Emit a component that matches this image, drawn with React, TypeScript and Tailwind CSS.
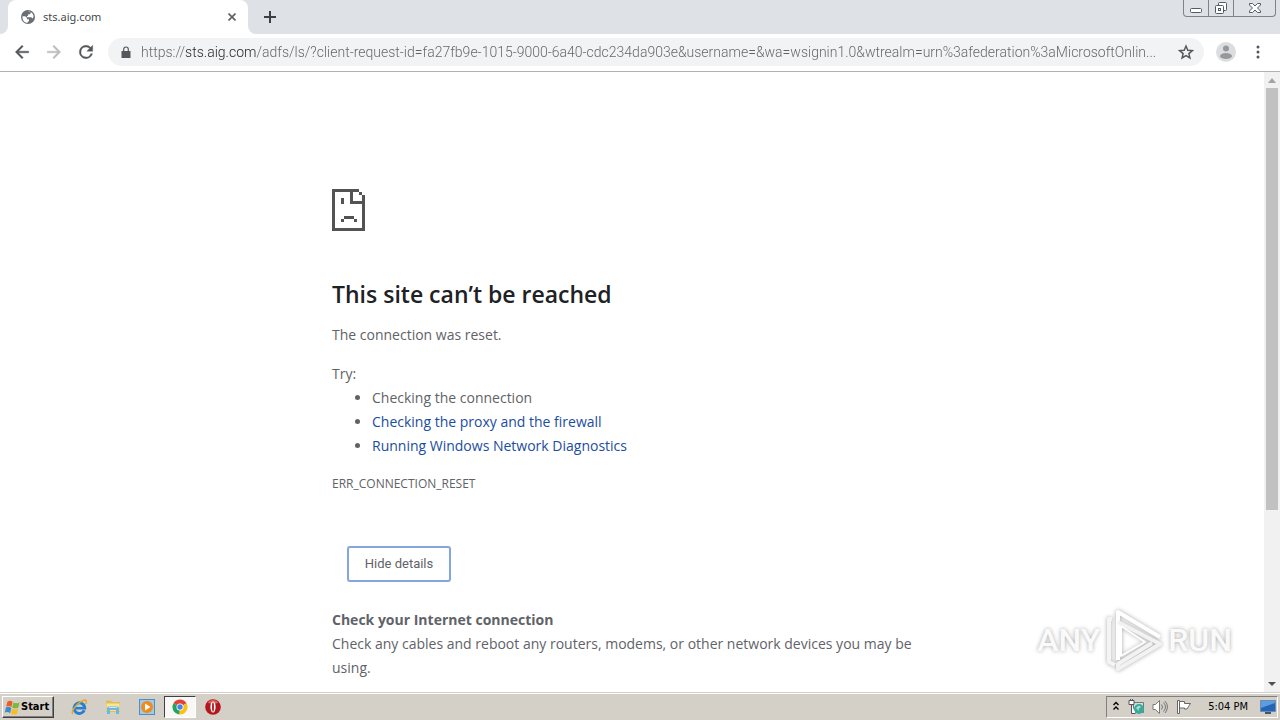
import { useState } from "react";
import type { ReactNode } from "react";

const PAGE_URL =
  "https://sts.aig.com/adfs/ls/?client-request-id=fa27fb9e-1015-9000-6a40-cdc234da903e&username=&wa=wsignin1.0&wtrealm=urn%3afederation%3aMicrosoftOnlin...";

function GlobeIcon() {
  return (
    <svg className="size-4 shrink-0" viewBox="0 0 16 16" aria-hidden="true">
      <circle cx="8" cy="8" r="7" fill="#6b6e72" />
      <path d="M2.500 7.200h2.700l1.800 1.700v1.300h2v1.600l-1.600 2C4.300 13.600 2 11 2.500 7.200Z" fill="#fff" />
      <path d="M8 2.600 11.200 3.500 9.800 5.300H8.200v1.300L6.900 7.300v1h4.300l1.700 1.100 .7-2.400-1.400-3L9.500 2.400Z" fill="#fff" />
    </svg>
  );
}

function TabStrip() {
  return (
    <header className="flex h-[34px] shrink-0 items-end bg-[#dee1e6] pl-2">
      <div className="relative flex h-full w-60 items-center rounded-t-lg bg-white pr-2 pl-3">
        <GlobeIcon />
        <span className="ml-[7px] flex-1 font-['Noto_Sans'] text-[11px] text-[#45494d]">sts.aig.com</span>
        <button type="button" aria-label="Close tab" className="flex size-4 items-center justify-center">
          <svg className="size-2" viewBox="0 0 8 8" stroke="#5f6368" strokeWidth="1.700">
            <path d="m.5.5 7 7M7.500.5l-7 7" />
          </svg>
        </button>
        <svg className="absolute bottom-0 -left-2 size-2" viewBox="0 0 8 8" fill="#fff" aria-hidden="true">
          <path d="M0 8a8 8 0 0 0 8-8v8Z" />
        </svg>
        <svg className="absolute -right-2 bottom-0 size-2" viewBox="0 0 8 8" fill="#fff" aria-hidden="true">
          <path d="M8 8a8 8 0 0 1-8-8v8Z" />
        </svg>
      </div>
      <button type="button" aria-label="New tab" className="ml-2 flex h-full w-7 items-center justify-center">
        <svg className="size-3" viewBox="0 0 12 12" stroke="#3c4043" strokeWidth="2">
          <path d="M6 0v12M0 6h12" />
        </svg>
      </button>
      <div className="mr-1 ml-auto flex h-[17px] self-start overflow-hidden rounded-b border border-t-0 border-[#7f848c] bg-[#dee1e6]">
        <button type="button" aria-label="Minimize" className="flex w-[25px] items-center justify-center border-r border-[#7f848c]">
          <svg className="h-4 w-3" viewBox="0 0 12 16" fill="#fff" stroke="#555a66">
            <rect x=".5" y="8.500" width="11" height="4" rx="1" />
          </svg>
        </button>
        <button type="button" aria-label="Restore" className="flex w-[25px] items-center justify-center border-r border-[#7f848c]">
          <svg className="h-4 w-3" viewBox="0 0 12 16" fill="#fff" stroke="#555a66">
            <rect x="3.500" y="2.500" width="8" height="8" rx="1" />
            <rect x=".5" y="5.500" width="8" height="8" rx="1" />
            <rect x="3.500" y="8.500" width="2" height="2" />
          </svg>
        </button>
        <button type="button" aria-label="Close" className="flex w-[41px] items-center justify-center">
          <svg className="h-4 w-3" viewBox="0 0 12 16" fill="#fff" stroke="#555a66">
            <path d="M.5 3.500h3L6 6l2.500-2.500h3v1.500L8.500 8l3 3v1.500h-3L6 10l-2.500 2.500h-3V11l3-3-3-3Z" />
          </svg>
        </button>
      </div>
    </header>
  );
}

function NavButton({ label, color, children }: { label: string; color: string; children: ReactNode }) {
  return (
    <button type="button" aria-label={label} className={`flex size-8 items-center justify-center ${color}`}>
      <svg className="size-5" viewBox="0 0 24 24" fill="currentColor">
        {children}
      </svg>
    </button>
  );
}

function Toolbar() {
  const [url, setUrl] = useState(PAGE_URL);

  return (
    <nav className="flex h-[38px] shrink-0 items-center border-b border-[#b0b2b0] bg-white pr-3 pb-px pl-1.5">
      <NavButton label="Back" color="text-[#54575b]">
        <path d="M20 11H7.830l5.590-5.590L12 4l-8 8 8 8 1.410-1.410L7.830 13H20v-2z" stroke="currentColor" strokeWidth=".5" />
      </NavButton>
      <NavButton label="Forward" color="text-[#babcbe]">
        <path d="m12 4-1.410 1.410L16.170 11H4v2h12.170l-5.580 5.590L12 20l8-8z" stroke="currentColor" strokeWidth=".5" />
      </NavButton>
      <NavButton label="Reload" color="text-[#54575b]">
        <path
          d="M17.650 6.350A7.960 7.960 0 0 0 12 4a8 8 0 1 0 7.730 10h-2.080A6 6 0 1 1 12 6c1.660 0 3.140.69 4.220 1.780L13 11h7V4l-2.350 2.350z"
          stroke="currentColor"
          strokeWidth=".5"
        />
      </NavButton>
      <div className="ml-1.5 flex h-7 min-w-0 flex-1 items-center rounded-full bg-[#f1f3f4] pr-2 pl-3">
        <svg className="h-3 w-3 shrink-0" viewBox="0 0 12 12" fill="#54575b" aria-hidden="true">
          <path d="M1.500 5h9v7h-9z" />
          <path d="M3.700 5.500V3.300a2.300 2.300 0 0 1 4.600 0v2.200" fill="none" stroke="#54575b" strokeWidth="1.200" />
        </svg>
        <input
          type="text"
          aria-label="Address and search bar"
          value={url}
          onChange={(e) => setUrl(e.target.value)}
          className="ml-[9px] min-w-0 flex-1 bg-[linear-gradient(90deg,#5f6368_44px,#202124_44px,#202124_116px,#5f6368_116px)] bg-clip-text font-['Roboto'] text-sm font-light text-transparent caret-black outline-none"
        />
        <button type="button" aria-label="Bookmark this page" className="flex size-5 items-center justify-center">
          <svg className="size-4" viewBox="0 0 24 24" fill="none" stroke="#54575b" strokeWidth="2.200">
            <path d="m12 3 2.700 6.300 6.800.6-5.200 4.500 1.600 6.600-5.900-3.500L6.100 21l1.600-6.600L2.500 9.900l6.800-.6Z" />
          </svg>
        </button>
      </div>
      <button type="button" aria-label="Profile" className="ml-3 flex size-5 items-center justify-center">
        <svg className="size-5" viewBox="0 0 20 20">
          <circle cx="10" cy="10" r="10" fill="#dcdde0" />
          <circle cx="10" cy="6.500" r="3" fill="#96989b" />
          <ellipse cx="10" cy="14" rx="6" ry="3" fill="#96989b" />
        </svg>
      </button>
      <button type="button" aria-label="Menu" className="ml-3 flex size-5 items-center justify-center">
        <svg className="h-4 w-1" viewBox="0 0 4 16" fill="#54575b">
          <circle cx="2" cy="3" r="1.500" />
          <circle cx="2" cy="8" r="1.500" />
          <circle cx="2" cy="13" r="1.500" />
        </svg>
      </button>
    </nav>
  );
}

function SadPageIcon() {
  return (
    <svg className="h-[42px] w-[33px]" viewBox="0 0 33 42" fill="#535353" shapeRendering="crispEdges" aria-hidden="true">
      <path d="M0 0h27v3H0zM0 0h3v42H0zM0 39h33v3H0zM30 6h3v36h-3zM27 3h3v3h-3zM18 0h3v15h-3zM18 12h15v3H18z" />
      <path d="M9 9h3v6H9zM12 27h10v3H12zM9 30h3v3H9zM22 30h3v3h-3z" />
    </svg>
  );
}

function ErrorPage() {
  const [open, setOpen] = useState(true);

  return (
    <main className="mx-auto w-full max-w-[600px] pt-[117px] font-['Open_Sans'] text-sm leading-6 text-[#5f6368]">
      <SadPageIcon />
      <h1 className="mt-12 text-[23px] leading-[30px] font-semibold text-[#202124]">This site can’t be reached</h1>
      <p className="mt-3.5">The connection was reset.</p>
      <p className="mt-[15px]">Try:</p>
      <ul className="list-disc pl-10">
        <li>Checking the connection</li>
        <li>
          <a href="#proxy" className="text-[#1a4da0]">Checking the proxy and the firewall</a>
        </li>
        <li>
          <a href="#diagnostics" className="text-[#1a4da0]">Running Windows Network Diagnostics</a>
        </li>
      </ul>
      <p className="mt-3.5 text-xs leading-6">ERR_CONNECTION_RESET</p>
      <button
        type="button"
        onClick={() => setOpen(!open)}
        className="mt-[50px] ml-[15px] h-9 w-[104px] rounded-[3px] border-2 border-[#84a5dd] bg-white font-['Roboto'] text-[13px]"
      >
        {open ? "Hide details" : "Details"}
      </button>
      {open && (
        <section className="mt-[26px]">
          <h2 className="font-bold">Check your Internet connection</h2>
          <p>Check any cables and reboot any routers, modems, or other network devices you may be using.</p>
        </section>
      )}
    </main>
  );
}

function Scrollbar() {
  return (
    <div className="flex w-4 shrink-0 flex-col items-center bg-[#f1f1f1]" aria-hidden="true">
      <svg className="size-4 shrink-0" viewBox="0 0 16 16" fill="#a3a3a3">
        <path d="m4 11 4-5 4 5Z" />
      </svg>
      <div className="h-[68%] w-3 bg-[#c1c1c1]" />
      <svg className="mt-auto size-4 shrink-0" viewBox="0 0 16 16" fill="#505050">
        <path d="m4 6 4 4 4-4Z" />
      </svg>
    </div>
  );
}

function Watermark() {
  return (
    <div className="absolute right-12 bottom-5 flex items-center gap-1 font-['Roboto'] text-[32px] leading-none font-medium text-[#fafafa] [text-shadow:0_0_4px_#a8a8a8]">
      <span>ANY</span>
      <svg className="h-16 w-15 drop-shadow-[0_0_2px_#a8a8a8]" viewBox="0 0 60 64" fill="none" stroke="#fff" strokeWidth="4" strokeLinejoin="round" aria-hidden="true">
        <path d="M8 11H5v43l6 3" stroke="#f4f4f4" />
        <path d="M14 52V4l42 25" />
        <path d="M14 14l42 22-42 25v-5l34-21" stroke="#f2f2f2" />
        <path d="M17 18v30l24-14Z" strokeWidth="2" />
      </svg>
      <span>RUN</span>
    </div>
  );
}

function IeIcon() {
  return (
    <svg className="size-4" viewBox="0 0 16 16" fill="none" aria-hidden="true">
      <path d="M13.300 11.200A5.300 5.300 0 1 1 13.700 9H4.500" stroke="#2b7fd0" strokeWidth="3" />
      <path d="M4.500 7.500h7" stroke="#8fd3f5" />
      <path d="M2 15C-1.500 12.500 8 2 14 1c2.200 0 1.500 2.500.5 4" stroke="#e0a92c" strokeWidth="1.400" />
    </svg>
  );
}

function FolderIcon() {
  return (
    <svg className="size-4" viewBox="0 0 16 16" aria-hidden="true">
      <path d="M1 1.500h5l1 1.500h8V13H1Z" fill="#dfbd5b" />
      <path d="M1.500 4.500h13V12h-13Z" fill="#f8e596" />
      <path d="M2 15V9.500q0-2 2-2h8q2 0 2 2V15h-3v-4H5v4Z" fill="#6cb8e2" />
      <path d="M4 8.500h8" stroke="#c4e6f5" />
    </svg>
  );
}

function PlayerIcon() {
  return (
    <svg className="size-4" viewBox="0 0 16 16" aria-hidden="true">
      <rect x=".5" y=".5" width="15" height="15" fill="#9ccbed" stroke="#4d8fc4" />
      <circle cx="8" cy="8" r="6" fill="#f28a18" />
      <path d="M6 4.500v7l5.500-3.500Z" fill="#fff" />
    </svg>
  );
}

function ChromeIcon() {
  return (
    <svg className="size-4" viewBox="0 0 16 16" aria-hidden="true">
      <path d="M8 8 1.500 4.200A7.500 7.500 0 0 1 14.500 4.300Z" fill="#e34133" />
      <path d="M8 8 1.500 4.200A7.500 7.500 0 0 0 7.500 15.500Z" fill="#24a35a" />
      <path d="m8 8 6.500-3.700A7.500 7.500 0 0 1 7.500 15.500Z" fill="#fbc116" />
      <circle cx="8" cy="8" r="3.500" fill="#fff" />
      <circle cx="8" cy="8" r="2.700" fill="#4285f4" />
    </svg>
  );
}

function OperaIcon() {
  return (
    <svg className="size-4" viewBox="0 0 16 16" aria-hidden="true">
      <circle cx="8" cy="8" r="7.800" fill="#b5161b" />
      <path d="M2.500 3.500a7.500 7.500 0 0 1 11 0Q8 7 2.500 3.500Z" fill="#d8605f" />
      <ellipse cx="8" cy="8" rx="2.600" ry="5.500" fill="#fff" />
      <ellipse cx="8" cy="8" rx=".9" ry="4.700" fill="#a51015" />
    </svg>
  );
}

function TaskButton({ label, active, children }: { label: string; active?: boolean; children: ReactNode }) {
  return (
    <button
      type="button"
      aria-label={label}
      className={`flex h-[22px] items-center justify-center ${
        active
          ? "w-8 border border-t-[#404040] border-r-white border-b-white border-l-[#404040] bg-[#f9f8f7]"
          : "w-[34px]"
      }`}
    >
      {children}
    </button>
  );
}

function Taskbar() {
  return (
    <footer className="flex h-7 shrink-0 items-center border-t border-[#d4d0c8] bg-[#d4d0c8] pr-0.5 pl-0.5 font-['DejaVu_Sans_Condensed','DejaVu_Sans'] text-[11px] text-black shadow-[inset_0_1px_0_#fff]">
      <button
        type="button"
        className="flex h-[22px] w-[52px] items-center gap-px border border-t-white border-r-[#404040] border-b-[#404040] border-l-white pt-0.5 pl-px font-bold shadow-[inset_-1px_-1px_0_#808080]"
      >
        <svg className="size-4 shrink-0" viewBox="0 0 16 16" aria-hidden="true">
          <path d="M3.500 1.500q3-1.500 5 .3L7.500 7q-2.500-1.800-5.300-.5Z" fill="#ee5b24" />
          <path d="M9.300 2.500q3 1.500 6.200 0L14.300 7.700q-3 1.300-6 0Z" fill="#7cb83c" />
          <path d="M2 7.500q2.500-1.500 5.300.5l-1.200 5.200q-2.500-2-5.300-.6Z" fill="#3a8ad0" />
          <path d="M8.100 8.700q3 1.500 6 0L13 14q-3 1.300-6.100-.3Z" fill="#f6bd24" />
        </svg>
        Start
      </button>
      <div className="ml-2 flex items-center">
        <TaskButton label="Internet Explorer"><IeIcon /></TaskButton>
        <TaskButton label="Windows Explorer"><FolderIcon /></TaskButton>
        <TaskButton label="Media Player"><PlayerIcon /></TaskButton>
        <TaskButton label="Google Chrome" active><ChromeIcon /></TaskButton>
        <TaskButton label="Opera"><OperaIcon /></TaskButton>
      </div>
      <div className="ml-auto flex h-[22px] items-center border border-t-[#808080] border-r-white border-b-white border-l-[#808080] pr-px pl-[5px]">
        <svg className="h-3 w-2" viewBox="0 0 8 12" fill="none" stroke="#000" strokeWidth="1.400" aria-hidden="true">
          <path d="m1.500 4 2.500-2.500L6.500 4M1.500 8.500 4 6l2.500 2.500" />
        </svg>
        <svg className="ml-2 size-4" viewBox="0 0 16 16" aria-hidden="true">
          <path d="M5.500 3.500h10v10h-10z" fill="#c7e3df" stroke="#777" />
          <circle cx="11" cy="10" r="5" fill="#3ba99b" />
          <path d="M8 9q3-4 5-1-3 1-2 4Z" fill="#a5e0d4" />
          <path d="M1 1.500h5v4H1zM3.500 5.500v9h4M2.500 0v2M4.500 0v2" fill="#fff" stroke="#555" />
        </svg>
        <svg className="ml-2 size-4" viewBox="0 0 16 16" fill="none" stroke="#777" aria-hidden="true">
          <path d="M1 5.500h2.500l4-4v13l-4-4H1Z" fill="#fff" />
          <path d="M9.500 5.500q2 2.500 0 5M11.500 3.500q4 4.500 0 9M13 2q5 6 0 12" />
        </svg>
        <svg className="ml-2 size-4" viewBox="0 0 16 16" fill="#fff" stroke="#666" aria-hidden="true">
          <path d="M1.500 1.500h2v13h-2z" />
          <path d="M3.500 2.500h5v2h6l-2 3-1.500 2.500h-2.500v-1h-5Z" />
        </svg>
        <time className="mt-0.5 ml-4">5:04 PM</time>
        <svg className="ml-3 size-4" viewBox="0 0 16 16" aria-hidden="true">
          <path d="M.5 1.500h15v11H.5z" fill="#2465b5" stroke="#6d8cae" />
          <path d="M1 2h14v2L1 9Z" fill="#5c9ce0" />
          <path d="M5 13h6v2H5z" fill="#456" />
        </svg>
      </div>
    </footer>
  );
}

export default function App() {
  return (
    <div className="flex h-screen flex-col overflow-hidden bg-white">
      <TabStrip />
      <Toolbar />
      <div className="relative flex min-h-0 flex-1">
        <div className="min-w-0 flex-1 overflow-hidden">
          <ErrorPage />
        </div>
        <Scrollbar />
        <Watermark />
      </div>
      <Taskbar />
    </div>
  );
}
